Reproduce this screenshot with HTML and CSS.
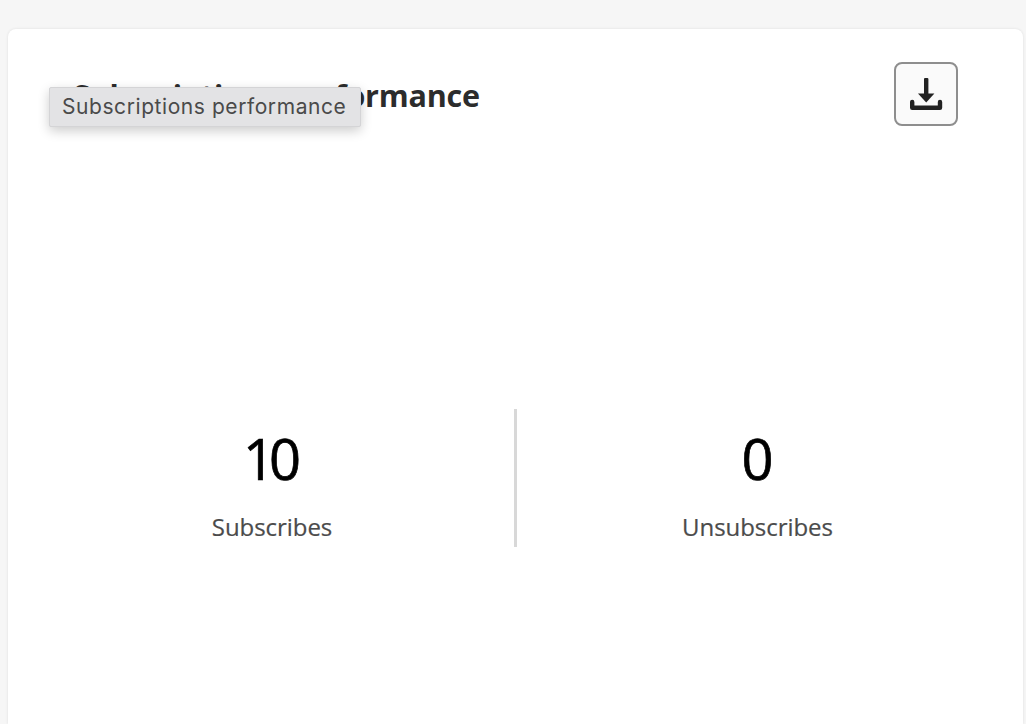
FILE: index.html
```html
<!DOCTYPE html>
<html lang="en">
<head>
<meta charset="utf-8">
<title>Subscriptions performance</title>
<link rel="stylesheet" href="styles.css">
</head>
<body>
<main class="card">
  <header class="card-header">
    <h1 class="title">Subscriptions performance</h1>
    <button class="download" type="button" aria-label="Download">
      <svg width="34" height="34" viewBox="0 0 34 34" aria-hidden="true">
        <rect class="icon-fill" x="15" y="1" width="4.4" height="17" rx="1"/>
        <path class="icon-fill" d="M9 16.5h16.4l-8.2 9z"/>
        <path class="icon-stroke" d="M3.2 25v5.7h27.8V25"/>
      </svg>
    </button>
  </header>
  <section class="metrics">
    <div class="metric">
      <div class="value">10</div>
      <div class="label">Subscribes</div>
    </div>
    <div class="metric metric-last">
      <div class="value">0</div>
      <div class="label">Unsubscribes</div>
    </div>
  </section>
  <div class="tooltip">Subscriptions performance</div>
</main>
</body>
</html>
```
FILE: styles.css
```css
* { box-sizing: border-box; }
html, body { height: 100%; }
body {
  margin: 0;
  padding: 29px 3px 0 8px;
  background: #f6f6f6;
  overflow: hidden;
  font-family: "Open Sans", "Noto Sans", sans-serif;
}
.card {
  position: relative;
  height: 695px;
  background: #fff;
  border-radius: 8px 8px 0 0;
  box-shadow: 0 0 3px rgba(0, 0, 0, 0.1);
  padding: 33px 65px 0 22px;
}
.card-header {
  display: flex;
  justify-content: space-between;
  align-items: center;
  padding-left: 43px;
}
.title {
  margin: 0;
  padding-top: 2px;
  font-size: 30.5px;
  line-height: 62px;
  font-weight: 700;
  letter-spacing: -0.2px;
  color: #2c2c2c;
}
.download {
  width: 64px;
  height: 64px;
  padding: 0;
  display: flex;
  align-items: center;
  justify-content: center;
  background: #fafafa;
  border: 2px solid #8e8e8e;
  border-radius: 8px;
}
.icon-fill { fill: #222; }
.icon-stroke { fill: none; stroke: #222; stroke-width: 4.4; stroke-linejoin: round; stroke-linecap: round; }
.metrics {
  display: flex;
  margin-top: 283px;
  height: 138px;
}
.metric {
  flex: 0 0 487px;
  display: flex;
  flex-direction: column;
  align-items: center;
  border-right: 3px solid #d8d8d8;
}
.metric-last {
  flex-basis: 481px;
  border-right: 0;
}
.value {
  margin-top: 16px;
  padding-right: 6px;
  font-size: 56px;
  line-height: 66px;
  letter-spacing: -6px;
  -webkit-text-stroke: 0.7px #000;
  color: #000;
}
.label {
  margin-top: 20px;
  font-size: 24px;
  line-height: 32px;
  letter-spacing: -0.05px;
  -webkit-text-stroke: 0.2px #4b4b4b;
  color: #4b4b4b;
}
.tooltip {
  position: absolute;
  left: 41px;
  top: 58px;
  width: 312px;
  height: 40px;
  padding-left: 12px;
  font-family: "Inter", sans-serif;
  font-size: 21px;
  line-height: 37px;
  letter-spacing: 0.57px;
  color: #4a4a4a;
  background: #e3e3e5;
  border: 1px solid #d4d4d6;
  border-radius: 2px;
  box-shadow: 0 4px 12px rgba(0, 0, 0, 0.2);
  white-space: nowrap;
}
```
